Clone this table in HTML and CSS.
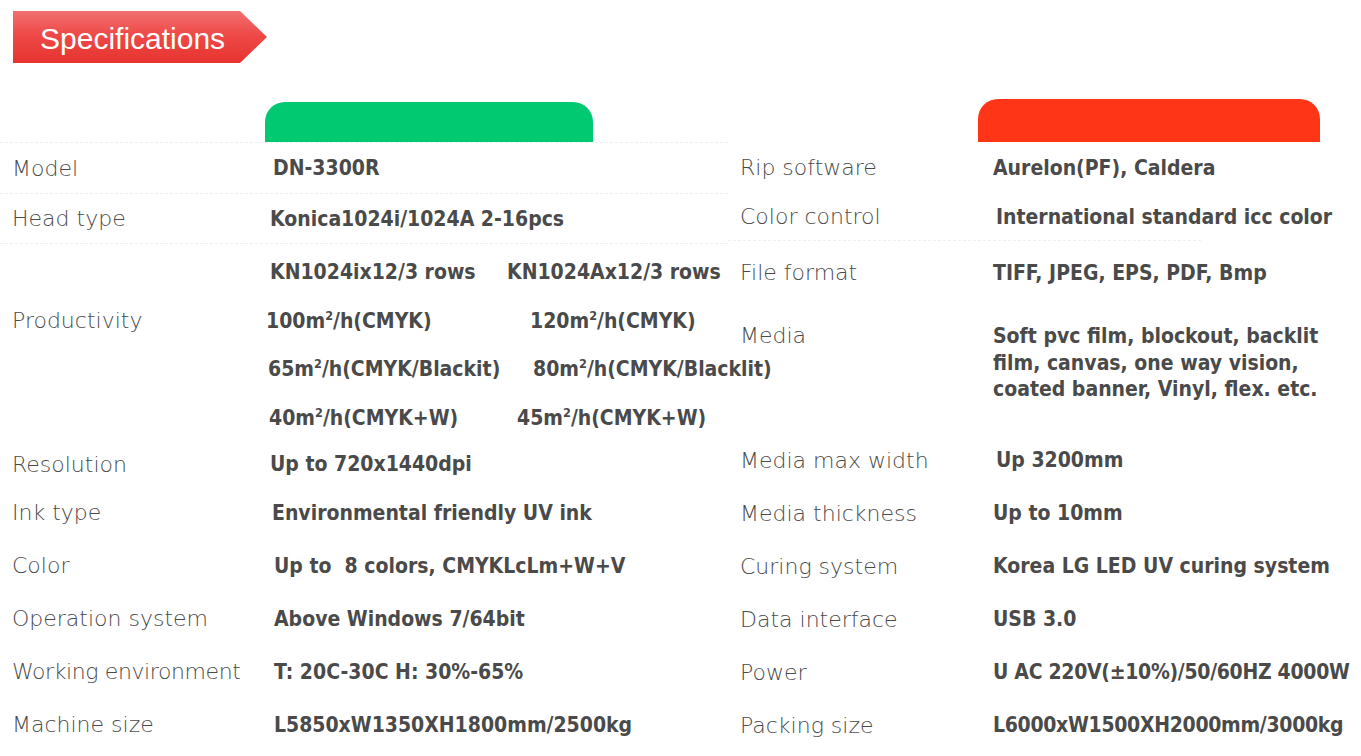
FILE: index.html
```html
<!DOCTYPE html>
<html lang="en">
<head>
<meta charset="utf-8">
<title>Specifications</title>
<link rel="stylesheet" href="styles.css">
</head>
<body>
<div class="page">
  <div class="banner"><span class="banner-text">Specifications</span></div>

  <div class="specs">
    <section class="half half-left">
      <div class="tab-row"><div class="tab tab-green"></div></div>
      <div class="row r-model line"><div class="label">Model</div><div class="value v-model">DN-3300R</div></div>
      <div class="row r-head line"><div class="label">Head type</div><div class="value">Konica1024i/1024A 2-16pcs</div></div>
      <div class="row r-prod line">
        <div class="label">Productivity</div>
        <div class="value prod">
          <div class="prod-line"><span class="p1">KN1024ix12/3 rows</span><span>KN1024Ax12/3 rows</span></div>
          <div class="prod-line"><span class="p2">100m<sup>2</sup>/h(CMYK)</span><span>120m<sup>2</sup>/h(CMYK)</span></div>
          <div class="prod-line"><span class="p3">65m<sup>2</sup>/h(CMYK/Blackit)</span><span>80m<sup>2</sup>/h(CMYK/Blacklit)</span></div>
          <div class="prod-line"><span class="p4">40m<sup>2</sup>/h(CMYK+W)</span><span>45m<sup>2</sup>/h(CMYK+W)</span></div>
        </div>
      </div>
      <div class="row r-res"><div class="label">Resolution</div><div class="value">Up to 720x1440dpi</div></div>
      <div class="row r-std"><div class="label">Ink type</div><div class="value v-ink">Environmental friendly UV ink</div></div>
      <div class="row r-std"><div class="label">Color</div><div class="value v-in">Up to&nbsp; 8 colors, CMYKLcLm+W+V</div></div>
      <div class="row r-std"><div class="label">Operation system</div><div class="value v-in">Above Windows 7/64bit</div></div>
      <div class="row r-std"><div class="label lbl-tight">Working environment</div><div class="value v-in">T: 20C-30C H: 30%-65%</div></div>
      <div class="row r-std"><div class="label">Machine size</div><div class="value v-in">L5850xW1350XH1800mm/2500kg</div></div>
    </section>

    <section class="half half-right">
      <div class="tab-row"><div class="tab tab-red"></div></div>
      <div class="row r-model"><div class="label">Rip software</div><div class="value">Aurelon(PF), Caldera</div></div>
      <div class="row r-cc"><div class="label">Color control</div><div class="value v-in">International standard icc color</div></div>
      <div class="row r-ff line-short"><div class="label">File format</div><div class="value">TIFF, JPEG, EPS, PDF, Bmp</div></div>
      <div class="row r-media"><div class="label">Media</div><div class="value media">Soft pvc film, blockout, backlit<br>film, canvas, one way vision,<br>coated banner, Vinyl, flex. etc.</div></div>
      <div class="row r-std"><div class="label">Media max width</div><div class="value v-in">Up 3200mm</div></div>
      <div class="row r-std"><div class="label">Media thickness</div><div class="value">Up to 10mm</div></div>
      <div class="row r-std"><div class="label">Curing system</div><div class="value">Korea LG LED UV curing system</div></div>
      <div class="row r-std"><div class="label">Data interface</div><div class="value">USB 3.0</div></div>
      <div class="row r-std"><div class="label">Power</div><div class="value v-narrow">U AC 220V(±10%)/50/60HZ 4000W</div></div>
      <div class="row r-std"><div class="label">Packing size</div><div class="value v-narrow">L6000xW1500XH2000mm/3000kg</div></div>
    </section>
  </div>
</div>
</body>
</html>
```

FILE: styles.css
```css
* { box-sizing: border-box; }
html, body { margin: 0; padding: 0; background: #ffffff; }
body { width: 1361px; height: 756px; overflow: hidden; }

.page { padding-top: 11px; }

.banner {
  margin-left: 13px;
  width: 254px;
  height: 52px;
  background: linear-gradient(to bottom, #f17070 0%, #ee4a48 45%, #e6332f 100%);
  clip-path: polygon(0 0, 227px 0, 254px 26px, 227px 52px, 0 52px);
  display: flex;
  align-items: center;
  padding-top: 3px;
}
.banner-text {
  margin-left: 27px;
  font-family: "Liberation Sans", Arial, sans-serif;
  font-size: 30px;
  color: #ffffff;
  line-height: 1;
}

.specs {
  display: grid;
  grid-template-columns: 728px 633px;
}

.tab-row {
  height: 79px;
  display: flex;
  align-items: flex-end;
}
.tab {
  border-radius: 20px 20px 0 0;
}
.tab-green { margin-left: 265px; width: 328px; height: 40px; background: #00c972; }
.tab-red { margin-left: 250px; width: 342px; height: 43px; background: #ff3517; }

.row {
  display: flex;
  align-items: center;
}
.label {
  width: 270px;
  padding-left: 12px;
  flex: none;
  font-family: "DejaVu Sans", sans-serif;
  font-weight: 200;
  font-size: 22px;
  color: #4a4a4a;
  white-space: nowrap;
}
.half-right .label { width: 265px; }
.lbl-tight { letter-spacing: -0.4px; }
.value {
  font-family: "DejaVu Sans Condensed", "Liberation Sans Narrow", "DejaVu Sans", sans-serif;
  font-stretch: condensed;
  font-weight: bold;
  font-size: 21px;
  color: #4a4a4a;
  white-space: nowrap;
}
.v-in { padding-left: 4px; }
.v-ink { padding-left: 2px; }
.v-model { padding-left: 3px; }
.half-right .v-in { padding-left: 3px; }
.v-narrow { letter-spacing: -0.3px; }

.line { border-top: 1px dashed #eeeeee; }
.line-short { border-top: 1px dashed #eeeeee; margin-right: 160px; }

.r-model { height: 51px; }
.r-head { height: 50px; }
.r-prod { height: 199px; align-items: flex-start; }
.r-prod .label { margin-top: 52.5px; line-height: 48.5px; }
.r-res { height: 44px; }
.r-std { height: 53px; }

.prod { padding-top: 4px; }
.prod-line {
  display: flex;
  height: 48.5px;
  align-items: center;
}
.prod-line sup { font-size: 0.6em; vertical-align: 0.6em; line-height: 0; }
.p1 { width: 237px; }
.p2 { width: 264px; margin-left: -4px; }
.p3 { width: 265px; margin-left: -2px; }
.p4 { width: 248px; margin-left: -1px; }

.r-cc { height: 47px; }
.r-ff { height: 64px; }
.r-media {
  height: 129.5px;
  align-items: flex-start;
  padding-top: 19px;
}
.r-media .label { line-height: 26.5px; }
.media { line-height: 26.5px; }
```
